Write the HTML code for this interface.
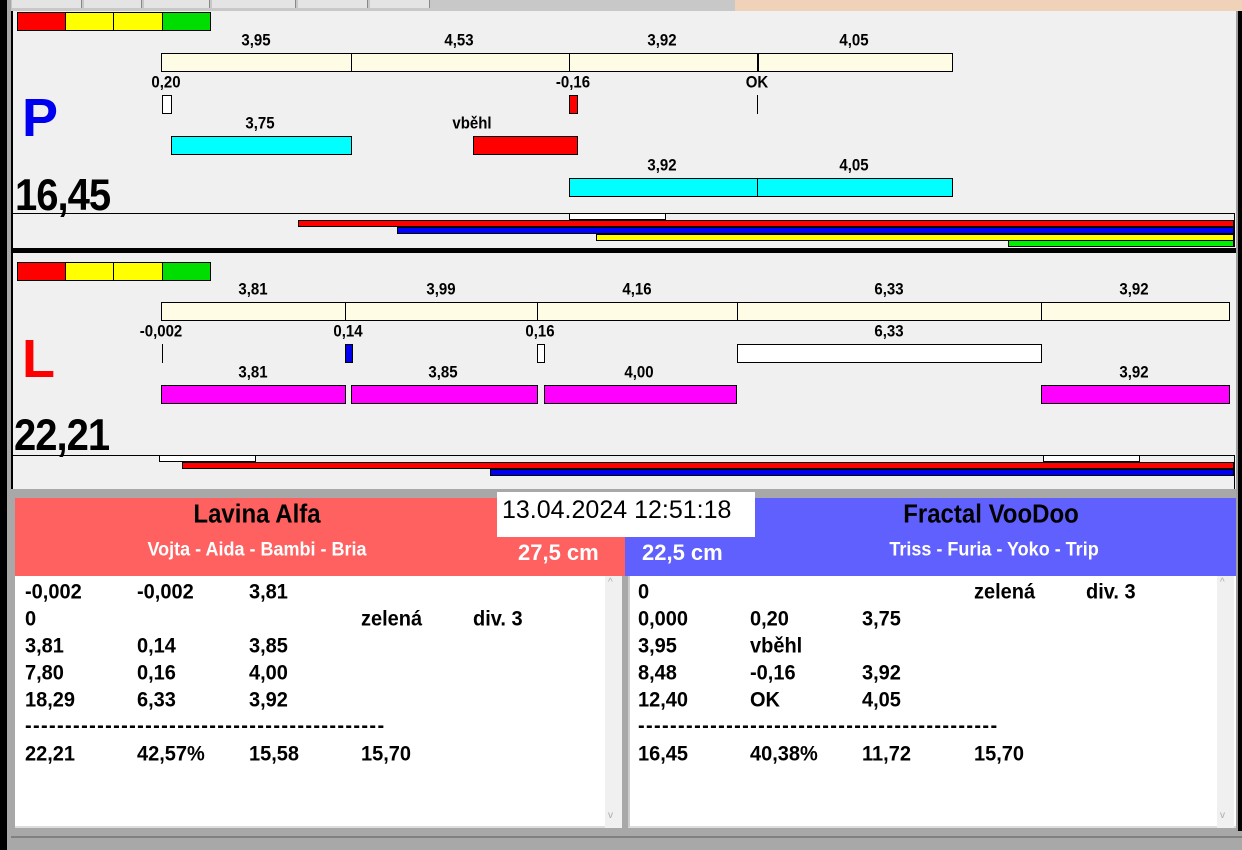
<!DOCTYPE html>
<html><head><meta charset="utf-8"><style>
*{margin:0;padding:0;box-sizing:border-box}
body{width:1242px;height:850px;position:relative;overflow:hidden;background:#a8a8a8;font-family:"Liberation Sans",Arial,sans-serif}
div{position:absolute}
.b{border:1px solid #000}
.t{font-weight:bold;font-size:15px;color:#000;transform:translateX(-50%) scaleY(1.1);white-space:nowrap;line-height:17px}
.l{font-weight:bold;font-size:20px;color:#000;white-space:nowrap;line-height:27px;transform:scaleY(1.08);transform-origin:0 50%}
.big{font-weight:bold;font-size:40px;line-height:44px;letter-spacing:-1px;transform:scaleY(1.12);transform-origin:0 100%}
</style></head><body>
<div style="left:0;top:0;width:735px;height:11px;background:#c8c8c8"></div>
<div style="left:12px;top:0;width:70px;height:8px;background:#e4e4e4;border-right:1px solid #888"></div>
<div style="left:84px;top:0;width:58px;height:8px;background:#e4e4e4;border-right:1px solid #888"></div>
<div style="left:144px;top:0;width:66px;height:8px;background:#e4e4e4;border-right:1px solid #888"></div>
<div style="left:212px;top:0;width:84px;height:8px;background:#e4e4e4;border-right:1px solid #888"></div>
<div style="left:298px;top:0;width:70px;height:8px;background:#e4e4e4;border-right:1px solid #888"></div>
<div style="left:370px;top:0;width:60px;height:8px;background:#e4e4e4;border-right:1px solid #888"></div>
<div style="left:735px;top:0;width:507px;height:11px;background:#efd2b8"></div>
<div style="left:0;top:0;width:7px;height:850px;background:#000"></div>
<div style="left:7px;top:0;width:4px;height:850px;background:#a8a8a8"></div>
<div style="left:1236px;top:11px;width:6px;height:820px;background:#000"></div>
<div style="left:1236px;top:11px;width:2px;height:820px;background:#a0a0a0"></div>

<div style="left:11px;top:11px;width:1225px;height:237px;background:#f0f0f0;border-left:2px solid #000"></div>
<div style="left:11px;top:248px;width:1225px;height:5px;background:#000"></div>
<div class="b" style="left:17px;top:12px;width:49px;height:19px;background:#f00"></div>
<div class="b" style="left:65px;top:12px;width:49px;height:19px;background:#ff0"></div>
<div class="b" style="left:113px;top:12px;width:50px;height:19px;background:#ff0"></div>
<div class="b" style="left:162px;top:12px;width:49px;height:19px;background:#0d0"></div>
<div class="t" style="left:256px;top:32px">3,95</div>
<div class="t" style="left:459px;top:32px">4,53</div>
<div class="t" style="left:662px;top:32px">3,92</div>
<div class="t" style="left:854px;top:32px">4,05</div>
<div class="b" style="left:161px;top:53px;width:191px;height:19px;background:#fffce6"></div>
<div class="b" style="left:351px;top:53px;width:219px;height:19px;background:#fffce6"></div>
<div class="b" style="left:569px;top:53px;width:190px;height:19px;background:#fffce6"></div>
<div class="b" style="left:757px;top:53px;width:196px;height:19px;background:#fffce6;border-left-width:2px"></div>
<div class="t" style="left:166px;top:74px">0,20</div>
<div class="t" style="left:573px;top:74px">-0,16</div>
<div class="t" style="left:757px;top:74px">OK</div>
<div class="b" style="left:162px;top:95px;width:10px;height:19px;background:#fff"></div>
<div class="b" style="left:569px;top:95px;width:9px;height:19px;background:#f00"></div>
<div style="left:757px;top:95px;width:1px;height:19px;background:#000"></div>
<div style="left:22px;top:88px;font-weight:bold;font-size:54px;color:#0000f0;line-height:60px">P</div>
<div class="t" style="left:260px;top:115px">3,75</div>
<div class="t" style="left:472px;top:115px">vběhl</div>
<div class="b" style="left:171px;top:136px;width:181px;height:19px;background:#0ff"></div>
<div class="b" style="left:473px;top:136px;width:105px;height:19px;background:#f00"></div>
<div class="t" style="left:662px;top:157px">3,92</div>
<div class="t" style="left:854px;top:157px">4,05</div>
<div class="b" style="left:569px;top:178px;width:190px;height:19px;background:#0ff"></div>
<div class="b" style="left:757px;top:178px;width:196px;height:19px;background:#0ff"></div>
<div class="big" style="left:15px;top:176px">16,45</div>
<div style="left:12px;top:213px;width:1223px;height:1px;background:#000"></div>
<div style="left:12px;top:213px;width:1px;height:8px;background:#000"></div>
<div style="left:1234px;top:213px;width:1px;height:34px;background:#000"></div>
<div class="b" style="left:569px;top:213px;width:97px;height:7px;background:#fff"></div>
<div style="left:298px;top:220px;width:936px;height:7px;background:#f00;border:1px solid #000"></div>
<div style="left:397px;top:227px;width:837px;height:7px;background:#00f;border:1px solid #000"></div>
<div style="left:596px;top:234px;width:638px;height:7px;background:#ff0;border:1px solid #000"></div>
<div style="left:1008px;top:240px;width:226px;height:7px;background:#0e0;border:1px solid #000"></div>

<div style="left:11px;top:253px;width:1225px;height:236px;background:#f0f0f0;border-left:2px solid #000"></div>
<div class="b" style="left:17px;top:262px;width:49px;height:19px;background:#f00"></div>
<div class="b" style="left:65px;top:262px;width:49px;height:19px;background:#ff0"></div>
<div class="b" style="left:113px;top:262px;width:50px;height:19px;background:#ff0"></div>
<div class="b" style="left:162px;top:262px;width:49px;height:19px;background:#0d0"></div>
<div class="t" style="left:253px;top:281px">3,81</div>
<div class="t" style="left:441px;top:281px">3,99</div>
<div class="t" style="left:637px;top:281px">4,16</div>
<div class="t" style="left:889px;top:281px">6,33</div>
<div class="t" style="left:1134px;top:281px">3,92</div>
<div class="b" style="left:161px;top:302px;width:185px;height:19px;background:#fffce6"></div>
<div class="b" style="left:345px;top:302px;width:193px;height:19px;background:#fffce6"></div>
<div class="b" style="left:537px;top:302px;width:201px;height:19px;background:#fffce6"></div>
<div class="b" style="left:737px;top:302px;width:305px;height:19px;background:#fffce6"></div>
<div class="b" style="left:1041px;top:302px;width:189px;height:19px;background:#fffce6"></div>
<div class="t" style="left:161px;top:323px">-0,002</div>
<div class="t" style="left:348px;top:323px">0,14</div>
<div class="t" style="left:540px;top:323px">0,16</div>
<div class="t" style="left:889px;top:323px">6,33</div>
<div style="left:162px;top:344px;width:1px;height:19px;background:#000"></div>
<div class="b" style="left:345px;top:344px;width:8px;height:19px;background:#00e"></div>
<div class="b" style="left:537px;top:344px;width:8px;height:19px;background:#fff"></div>
<div class="b" style="left:737px;top:344px;width:305px;height:19px;background:#fff"></div>
<div style="left:22px;top:329px;font-weight:bold;font-size:54px;color:#f00;line-height:60px">L</div>
<div class="t" style="left:253px;top:364px">3,81</div>
<div class="t" style="left:443px;top:364px">3,85</div>
<div class="t" style="left:639px;top:364px">4,00</div>
<div class="t" style="left:1134px;top:364px">3,92</div>
<div class="b" style="left:161px;top:385px;width:185px;height:19px;background:#f0f"></div>
<div class="b" style="left:351px;top:385px;width:187px;height:19px;background:#f0f"></div>
<div class="b" style="left:544px;top:385px;width:193px;height:19px;background:#f0f"></div>
<div class="b" style="left:1041px;top:385px;width:189px;height:19px;background:#f0f"></div>
<div class="big" style="left:14px;top:416px">22,21</div>
<div style="left:12px;top:455px;width:1223px;height:1px;background:#000"></div>
<div style="left:12px;top:455px;width:1px;height:8px;background:#000"></div>
<div style="left:1234px;top:455px;width:1px;height:34px;background:#000"></div>
<div class="b" style="left:159px;top:455px;width:97px;height:7px;background:#fff"></div>
<div class="b" style="left:1043px;top:455px;width:97px;height:7px;background:#fff"></div>
<div style="left:182px;top:462px;width:1052px;height:7px;background:#f00;border:1px solid #000"></div>
<div style="left:490px;top:469px;width:744px;height:7px;background:#00e;border:1px solid #000"></div>

<div style="left:11px;top:489px;width:1225px;height:340px;background:#a8a8a8"></div>
<div style="left:15px;top:498px;width:610px;height:78px;background:#ff6060"></div>
<div style="left:625px;top:498px;width:611px;height:78px;background:#6060ff"></div>
<div style="left:497px;top:492px;width:258px;height:45px;background:#fff"></div>
<div style="left:502px;top:495px;font-size:25px;line-height:30px;color:#000">13.04.2024 12:51:18</div>
<div style="left:257px;top:501px;transform:translateX(-50%) scaleY(1.08);font-weight:bold;font-size:24px;line-height:28px">Lavina Alfa</div>
<div style="left:257px;top:538px;transform:translateX(-50%) scaleY(1.08);font-weight:bold;font-size:18px;line-height:22px;color:#fff;white-space:nowrap">Vojta - Aida - Bambi - Bria</div>
<div style="left:518px;top:540px;font-weight:bold;font-size:22px;line-height:26px;color:#fff">27,5 cm</div>
<div style="left:642px;top:540px;font-weight:bold;font-size:22px;line-height:26px;color:#fff">22,5 cm</div>
<div style="left:991px;top:501px;transform:translateX(-50%) scaleY(1.08);font-weight:bold;font-size:24px;line-height:28px;white-space:nowrap">Fractal VooDoo</div>
<div style="left:994px;top:538px;transform:translateX(-50%) scaleY(1.08);font-weight:bold;font-size:18px;line-height:22px;color:#fff;white-space:nowrap">Triss - Furia - Yoko - Trip</div>

<div style="left:15px;top:576px;width:607px;height:252px;background:#fff;border-bottom:2px solid #ddd"></div>
<div style="left:605px;top:576px;width:17px;height:252px;background:#f0f0f0"></div>
<div style="left:608px;top:577px;font-size:10px;color:#aaa">^</div>
<div style="left:608px;top:810px;font-size:10px;color:#aaa">v</div>
<div style="left:628px;top:576px;width:608px;height:252px;background:#fff;border-bottom:2px solid #ddd;border-left:2px solid #ccc"></div>
<div style="left:1217px;top:576px;width:17px;height:252px;background:#f0f0f0"></div>
<div style="left:1220px;top:577px;font-size:10px;color:#aaa">^</div>
<div style="left:1220px;top:810px;font-size:10px;color:#aaa">v</div>
<div style="left:11px;top:836px;width:1231px;height:2px;background:#808080"></div>

<div class="l" style="left:25px;top:579px">-0,002</div><div class="l" style="left:137px;top:579px">-0,002</div><div class="l" style="left:249px;top:579px">3,81</div>
<div class="l" style="left:25px;top:606px">0</div><div class="l" style="left:361px;top:606px">zelená</div><div class="l" style="left:473px;top:606px">div. 3</div>
<div class="l" style="left:25px;top:633px">3,81</div><div class="l" style="left:137px;top:633px">0,14</div><div class="l" style="left:249px;top:633px">3,85</div>
<div class="l" style="left:25px;top:660px">7,80</div><div class="l" style="left:137px;top:660px">0,16</div><div class="l" style="left:249px;top:660px">4,00</div>
<div class="l" style="left:25px;top:687px">18,29</div><div class="l" style="left:137px;top:687px">6,33</div><div class="l" style="left:249px;top:687px">3,92</div>
<div class="l" style="left:25px;top:713px;letter-spacing:1.35px">---------------------------------------------</div>
<div class="l" style="left:25px;top:741px">22,21</div><div class="l" style="left:137px;top:741px">42,57%</div><div class="l" style="left:249px;top:741px">15,58</div><div class="l" style="left:361px;top:741px">15,70</div>

<div class="l" style="left:638px;top:579px">0</div><div class="l" style="left:974px;top:579px">zelená</div><div class="l" style="left:1086px;top:579px">div. 3</div>
<div class="l" style="left:638px;top:606px">0,000</div><div class="l" style="left:750px;top:606px">0,20</div><div class="l" style="left:862px;top:606px">3,75</div>
<div class="l" style="left:638px;top:633px">3,95</div><div class="l" style="left:750px;top:633px">vběhl</div>
<div class="l" style="left:638px;top:660px">8,48</div><div class="l" style="left:750px;top:660px">-0,16</div><div class="l" style="left:862px;top:660px">3,92</div>
<div class="l" style="left:638px;top:687px">12,40</div><div class="l" style="left:750px;top:687px">OK</div><div class="l" style="left:862px;top:687px">4,05</div>
<div class="l" style="left:638px;top:713px;letter-spacing:1.35px">---------------------------------------------</div>
<div class="l" style="left:638px;top:741px">16,45</div><div class="l" style="left:750px;top:741px">40,38%</div><div class="l" style="left:862px;top:741px">11,72</div><div class="l" style="left:974px;top:741px">15,70</div>
</body></html>
